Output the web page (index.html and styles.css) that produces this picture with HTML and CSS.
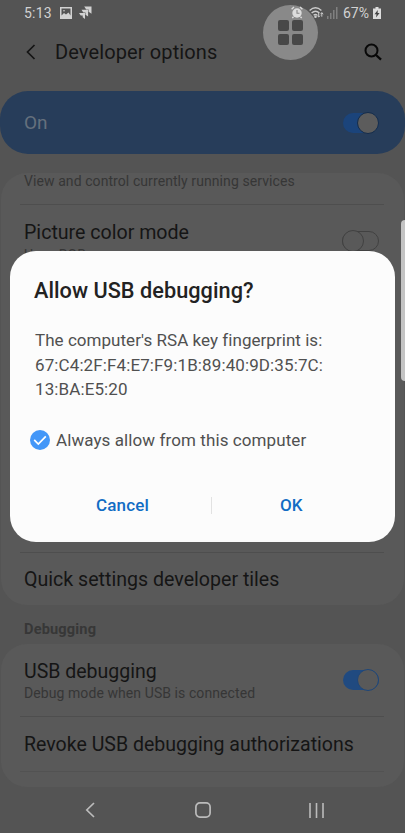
FILE: index.html
```html
<!DOCTYPE html>
<html lang="en">
<head>
<meta charset="utf-8">
<title>Developer options</title>
<link rel="stylesheet" href="styles.css">
</head>
<body>
<div class="screen">
  <div class="status">
    <span class="clock">5:13</span>
    <svg class="pic" width="12" height="12" viewBox="0 0 12 12"><path fill="#d2d2d2" fill-rule="evenodd" d="M0 0h12v12H0zM1.500 1.500v7l2.500-2.500 2 1.500 2.500-2 2 3v-7z"/><circle cx="4" cy="3.700" r=".8" fill="#d2d2d2"/></svg>
    <svg class="jira" width="13" height="13" viewBox="0 0 13 13" fill="#d2d2d2"><path d="M5.200.5h7.300v7.300L9.600 5.800V3.600H7.200z"/><path d="M2.500 3.800h6.600v6.600L6.500 8.700V6.600H4.300z"/><path d="M0 7h6v6L3.700 11.200V9.400H1.700z"/></svg>
    <span class="grow"></span>
    <svg class="alarm" width="12" height="13" viewBox="0 0 12 13"><circle cx="6" cy="7" r="4.700" fill="#ddd"/><path d="M.6 3.200 3 1M11.400 3.200 9 1M2.500 10.800 1.300 12M9.500 10.800l1.200 1.200" stroke="#ddd" stroke-width="1.400"/><path d="M6 4v3.300h2.500" fill="none" stroke="#888" stroke-width="1.100"/></svg>
    <svg class="wifi" width="15" height="13" viewBox="0 0 15 13" fill="none" stroke="#ccc" stroke-width="1.400"><path d="M.6 4.500Q6.500-.8 12.400 4.500M2.600 7Q6.500 3.500 10.400 7M4.600 9.300Q6.500 7.600 8.200 9.300"/><circle cx="6.500" cy="10.800" r=".6" fill="#ccc"/><path d="M9.700 7v4m-1.400-1.300L9.700 11l1.300-1.300M12.800 10.700v-4m-1.300 1.500 1.300-1.500 1.400 1.500" stroke-width="1"/></svg>
    <svg class="signal" width="11" height="12" viewBox="0 0 11 12" fill="#808080"><path d="M0 9h1.500v3H0zM3 6h1.500v6H3zM6 3h1.500v9H6zM9 0h1.500v12H9z"/></svg>
    <span class="percent">67%</span>
    <svg class="battery" width="8" height="12" viewBox="0 0 8 12"><path fill="#ddd" d="M2.500 0h3v1.500H8V12H0V1.500h2.500z"/><path fill="#444" d="M4.800 3 1.500 7.200h2L3 10.500 6.600 6h-2z"/></svg>
  </div>
  <div class="header">
    <svg class="back" width="10" height="16" viewBox="0 0 10 16"><path d="M8.500 1 1.500 8l7 7" fill="none" stroke="#151515" stroke-width="1.700"/></svg>
    <h1 class="title">Developer options</h1>
    <svg class="search" width="18" height="18" viewBox="0 0 18 18" fill="none" stroke="#080808" stroke-width="2"><circle cx="7.500" cy="7.500" r="6"/><path d="M12 12l5 4.700" stroke-width="2.300"/></svg>
  </div>
  <div class="banner"><span class="on">On</span><span class="switch switch-banner"><span class="knob"></span></span></div>
  <div class="card card-top">
    <div class="row row-services"><span class="sub services">View and control currently running services</span></div>
    <div class="row row-color">
      <div><div class="label color-label">Picture color mode</div><div class="sub color-sub">Use sRGB</div></div>
      <span class="switch switch-off"><span class="knob"></span></span>
    </div>
    <div class="row row-tiles"><span class="label tiles-label">Quick settings developer tiles</span></div>
  </div>
  <div class="section">Debugging</div>
  <div class="card card-debug">
    <div class="row row-usb">
      <div><div class="label usb-label">USB debugging</div><div class="sub usb-sub">Debug mode when USB is connected</div></div>
      <span class="switch"><span class="knob"></span></span>
    </div>
    <div class="row row-revoke"><span class="label revoke-label">Revoke USB debugging authorizations</span></div>
    <div class="row row-last"></div>
  </div>
  <div class="nav">
    <svg width="10" height="16" viewBox="0 0 10 16"><path d="M9 1 1.800 8 9 15" fill="none" stroke="#bbb" stroke-width="1.700"/></svg>
    <svg class="home" width="16" height="16" viewBox="0 0 16 16"><rect x=".9" y=".9" width="14.200" height="14.200" rx="4" fill="none" stroke="#bbb" stroke-width="1.700"/></svg>
    <svg width="15" height="15" viewBox="0 0 15 15"><path d="M1 0v15M7.500 0v15M14 0v15" stroke="#bbb" stroke-width="1.600"/></svg>
  </div>

  <div class="assist"><i></i><i></i><i></i><i></i></div>
  <div class="edge"></div>
  <div class="dialog">
    <h2 class="dialog-title">Allow USB debugging?</h2>
    <p class="message"><span class="line1">The computer's RSA key fingerprint is:</span><br><span class="line2">67:C4:2F:F4:E7:F9:1B:89:40:9D:35:7C:</span><br><span class="line2">13:BA:E5:20</span></p>
    <div class="check">
      <svg width="20" height="20" viewBox="0 0 20 20"><circle cx="10" cy="10" r="10" fill="#4397f8"/><path d="M4.200 9.900 8.300 14 15.800 6.300" fill="none" stroke="#fff" stroke-width="1.700"/></svg>
      <span class="check-text">Always allow from this computer</span>
    </div>
    <div class="actions"><span class="cancel">Cancel</span><span class="divider"></span><span class="ok">OK</span></div>
  </div>
</div>
</body>
</html>
```
FILE: styles.css
```css
* { box-sizing: border-box; }
body { margin: 0; font-family: Roboto, sans-serif; background: #545454; }
.screen { position: relative; width: 405px; height: 833px; overflow: hidden; background: #545454; display: flex; flex-direction: column; }
.status { height: 25px; flex: none; display: flex; align-items: center; padding: 0 24px; color: #d2d2d2; font-size: 14px; position: relative; z-index: 2; }
.clock { width: 36px; letter-spacing: .2px; }
.jira { margin-left: 7px; }
.grow { flex: 1; }
.wifi { margin-left: 6px; }
.signal { margin-left: 3px; }
.percent { margin-left: 5px; width: 27px; white-space: nowrap; }
.battery { margin-left: 3px; }
.header { height: 66px; flex: none; display: flex; align-items: center; padding: 0 23px 13px 26px; }
.title { margin: 0 0 0 19px; flex: 1; font-size: 20px; font-weight: 400; letter-spacing: .12px; color: #151515; white-space: nowrap; }
.banner { height: 63px; flex: none; border-radius: 28px; background: #273d5a; display: flex; align-items: center; justify-content: space-between; padding: 0 26px 0 24px; }
.on { color: #65707d; font-size: 19px; }
.switch { width: 36px; height: 20px; flex: none; display: flex; align-items: center; justify-content: flex-end; border-radius: 10px; background: #204a80; }
.knob { width: 22px; height: 22px; flex: none; border-radius: 50%; background: #595959; border: 1px solid #1e4679; }
.switch-banner { background: #1b447b; }
.switch-banner .knob { background: #5c5c5c; border-color: #142c4b; }
.switch-off { background: none; border: 1px solid #414141; justify-content: flex-start; width: 37px; height: 20px; }
.switch-off .knob { border-color: #414141; margin-left: -1px; }
.card { flex: none; background: #595959; border-radius: 26px; margin: 0 1px; display: flex; flex-direction: column; }
.card-top { height: 432px; margin-top: 19px; }
.card-debug { height: 143px; }
.row { display: flex; justify-content: space-between; margin: 0 20px 0 19px; padding: 0 5px 0 4px; white-space: nowrap; }
.row + .row { border-top: 1px solid #4e4e4e; }
.label { font-size: 19.600px; line-height: 24px; color: #151515; }
.usb-label { font-size: 19.500px; }
.revoke-label { font-size: 19.550px; }
.sub { font-size: 14px; line-height: 16px; letter-spacing: .08px; color: #363636; }
.color-sub { margin-top: 2px; }
.usb-sub { margin-top: 1px; }
.row-services { height: 31px; }
.row-color { height: 348px; padding-top: 16px; }
.row-color .switch { margin-top: 10px; }
.row-tiles { height: 53px; align-items: center; padding-top: 2px; }
.section { height: 39px; flex: none; padding: 9px 24px 0; display: flex; align-items: center; font-size: 14.600px; font-weight: 700; letter-spacing: .15px; color: #373737; }
.row-usb { height: 72px; padding-top: 16px; }
.row-usb .switch { margin-top: 10px; }
.row-revoke { height: 55px; align-items: center; padding-top: 2px; }
.row + .row-last { height: 16px; border-color: #525252; }
.nav { flex: 1; display: flex; align-items: center; justify-content: space-between; padding: 0 81px 0 85px; }
.home { margin-left: 2px; }
.assist { position: absolute; left: 263px; top: 5px; width: 55px; height: 55px; border-radius: 50%; background: #898989; display: grid; grid-template-columns: 11px 11px; grid-template-rows: 11px 11px; gap: 3px; place-content: center; }
.assist i { background: #484848; border-radius: 2px; }
.edge { position: absolute; left: 401px; top: 220px; width: 8px; height: 161px; border-radius: 4px; background: #c4c4c4; }
.dialog { position: absolute; left: 10px; top: 251px; width: 385px; height: 291px; border-radius: 26px; background: #fcfcfc; padding: 27px 24px 0; display: flex; flex-direction: column; white-space: nowrap; }
.dialog-title { margin: 0; font-size: 21.700px; line-height: 26px; font-weight: 500; letter-spacing: .04px; color: #222; }
.message { margin: 24px 0 0 1px; font-size: 17px; line-height: 24.700px; color: #505050; }
.line1 { letter-spacing: .04px; }
.line2 { letter-spacing: .11px; }
.check { display: flex; align-items: center; margin: 27px 0 0 -4px; gap: 6px; height: 22px; font-size: 17px; letter-spacing: .09px; color: #505050; }
.actions { display: flex; align-items: center; margin-top: 43px; height: 22px; font-size: 17px; font-weight: 500; letter-spacing: .15px; color: #126cc4; }
.cancel { width: 177px; padding-left: 62px; }
.divider { width: 1px; height: 17px; background: #e2e2e2; }
.ok { padding-left: 68px; }
```
